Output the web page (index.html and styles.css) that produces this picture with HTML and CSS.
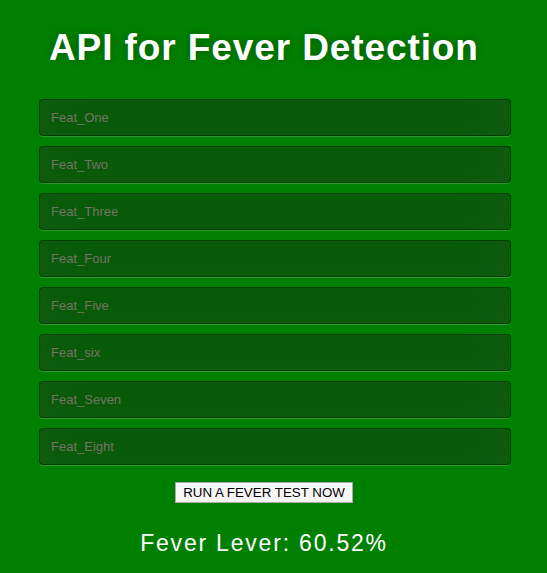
FILE: index.html
```html
<!DOCTYPE html>
<html>
<head>
<meta charset="utf-8">
<link rel="stylesheet" href="styles.css">
</head>
<body>
<div class="page">
  <h1 class="title">API for Fever Detection</h1>
  <form class="form">
    <input class="field" type="text" placeholder="Feat_One">
    <input class="field" type="text" placeholder="Feat_Two">
    <input class="field" type="text" placeholder="Feat_Three">
    <input class="field" type="text" placeholder="Feat_Four">
    <input class="field" type="text" placeholder="Feat_Five">
    <input class="field" type="text" placeholder="Feat_six">
    <input class="field" type="text" placeholder="Feat_Seven">
    <input class="field" type="text" placeholder="Feat_Eight">
    <div class="actions"><button class="run" type="button">RUN A FEVER TEST NOW</button></div>
  </form>
  <div class="result">Fever Lever: 60.52%</div>
</div>
</body>
</html>
```
FILE: styles.css
```css
html, body {
  margin: 0;
  padding: 0;
  background: #008000;
  font-family: "Liberation Sans", Arial, sans-serif;
}
.page {
  width: 472px;
  padding: 0 0 0 39px;
  height: 573px;
  overflow: hidden;
}
.title {
  margin: 0;
  padding: 26px 0 0 10px;
  font-size: 37px;
  font-weight: bold;
  letter-spacing: 0.9px;
  color: #fff;
  text-shadow: 0 0 10px rgba(0,0,0,0.3);
  line-height: 44px;
}
.form {
  margin-top: 29px;
  display: flex;
  flex-direction: column;
}
.field {
  box-sizing: border-box;
  width: 472px;
  height: 37px;
  margin: 0 0 10px 0;
  padding: 10px 11px;
  font-family: "Liberation Sans", Arial, sans-serif;
  font-size: 13px;
  color: #fff;
  background: rgba(0,0,0,0.3);
  border: 1px solid rgba(0,0,0,0.3);
  border-radius: 4px;
  outline: none;
  box-shadow: inset 0 -5px 45px rgba(100,100,100,0.2), 0 1px 1px rgba(255,255,255,0.2);
}
.field::placeholder {
  color: #747467;
}
.actions {
  display: flex;
  justify-content: center;
  padding-right: 22px;
  margin-top: 7px;
}
.run {
  font-family: "Liberation Sans", Arial, sans-serif;
  font-size: 13.33px;
  height: 21px;
  padding: 0 7px;
  color: #000;
  background: #f7f7f7;
  border: 1px solid #aaa;
  border-radius: 0;
}
.result {
  margin-top: 27px;
  text-align: center;
  padding-right: 22px;
  color: #fff;
  font-size: 23px;
  letter-spacing: 1.8px;
}
```
